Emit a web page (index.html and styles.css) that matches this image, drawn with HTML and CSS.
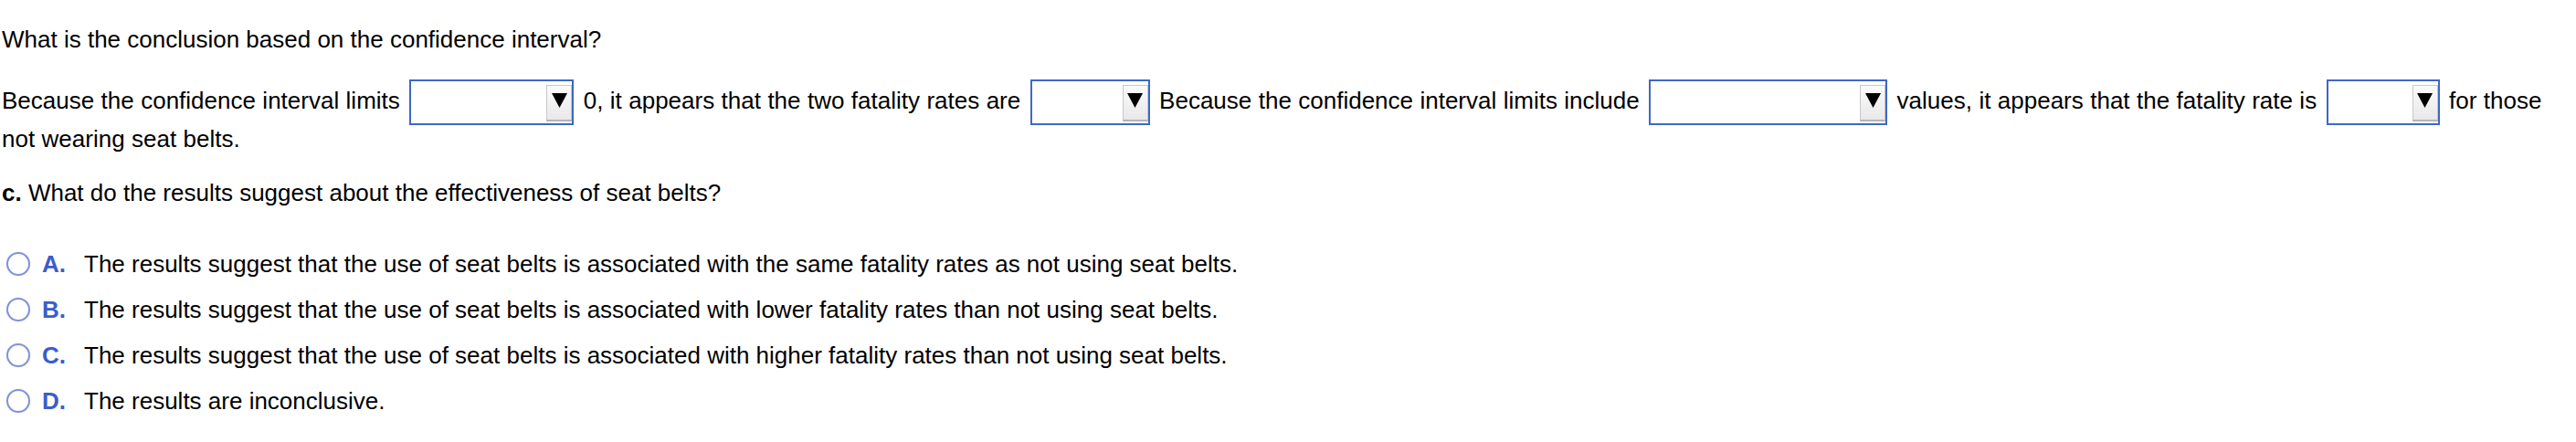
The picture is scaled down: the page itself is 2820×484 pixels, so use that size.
FILE: index.html
```html
<!DOCTYPE html>
<html lang="en">

<head>
    <meta charset="UTF-8">
    <title>Confidence Interval Question</title>
    <link rel="stylesheet" href="styles.css">
</head>

<body>
    <div class="question">
        <p class="prompt">What is the conclusion based on the confidence interval?</p>

        <!-- Fill in the blanks -->
        <p class="fill">
            <span>Because the confidence interval limits</span>
            <span class="dropdown w180"><span class="drop-btn"><svg width="17" height="16" viewBox="0 0 17 16"><polygon points="0,0 17,0 8.5,16" fill="#000"/></svg></span></span>
            <span>0, it appears that the two fatality rates are</span>
            <span class="dropdown w131"><span class="drop-btn"><svg width="17" height="16" viewBox="0 0 17 16"><polygon points="0,0 17,0 8.5,16" fill="#000"/></svg></span></span>
            <span>Because the confidence interval limits include</span>
            <span class="dropdown w261"><span class="drop-btn"><svg width="17" height="16" viewBox="0 0 17 16"><polygon points="0,0 17,0 8.5,16" fill="#000"/></svg></span></span>
            <span>values, it appears that the fatality rate is</span>
            <span class="dropdown w124"><span class="drop-btn"><svg width="17" height="16" viewBox="0 0 17 16"><polygon points="0,0 17,0 8.5,16" fill="#000"/></svg></span></span>
            <span>for those</span><br>
            <span>not wearing seat belts.</span>
        </p>

        <p class="part"><b>c.</b> What do the results suggest about the effectiveness of seat belts?</p>

        <!-- Answer choices -->
        <ul class="choices">
            <li><span class="radio"></span><span class="letter">A.</span>The results suggest that the use of seat belts is associated with the same fatality rates as not using seat belts.</li>
            <li><span class="radio"></span><span class="letter">B.</span>The results suggest that the use of seat belts is associated with lower fatality rates than not using seat belts.</li>
            <li><span class="radio"></span><span class="letter">C.</span>The results suggest that the use of seat belts is associated with higher fatality rates than not using seat belts.</li>
            <li><span class="radio"></span><span class="letter">D.</span>The results are inconclusive.</li>
        </ul>
    </div>
</body>

</html>
```
FILE: styles.css
```css
/* Question layout */

body {
    font-family: "Liberation Sans", Arial, sans-serif;
    font-size: 26px;
    line-height: 30px;
    color: #000;
    background: #fff;
    margin: 0;
    padding: 0;
}

.question {
    padding: 0 10px 0 2px;
}

.prompt {
    margin: 28px 0 0;
}

.fill {
    margin: 29px 0 0;
    word-spacing: 0.2px;
}

.part {
    margin: 29px 0 0;
}

.part b {
    font-weight: bold;
}

/* Dropdown blanks */

.dropdown {
    display: inline-flex;
    justify-content: flex-end;
    align-items: flex-start;
    box-sizing: border-box;
    height: 50px;
    border: 2px solid #3d68c6;
    background: #fff;
    padding-top: 4px;
    vertical-align: middle;
    margin: 0 3px;
}

.w180 { width: 180px; }
.w131 { width: 131px; }
.w261 { width: 261px; }
.w124 { width: 124px; }

.drop-btn {
    display: flex;
    align-items: center;
    justify-content: center;
    box-sizing: border-box;
    width: 28px;
    height: 40px;
    border: 1px solid #c8c8c8;
    border-bottom: 2px solid #b4b4b4;
    background: linear-gradient(#fbfbfb, #e8e8e8);
}

.drop-btn svg {
    display: block;
    margin-top: -6px;
}

/* Choices */

.choices {
    list-style: none;
    margin: 38px 0 0;
    padding: 0;
}

.choices li {
    display: flex;
    align-items: center;
    height: 50px;
}

.radio {
    box-sizing: border-box;
    width: 26px;
    height: 26px;
    border: 2px solid #8093d6;
    border-radius: 50%;
    box-shadow: 0 0 1px #b7c2ea;
    margin-left: 5px;
    margin-right: 13px;
    flex-shrink: 0;
}

.letter {
    width: 46px;
    color: #3b5dcb;
    font-weight: bold;
}
```
